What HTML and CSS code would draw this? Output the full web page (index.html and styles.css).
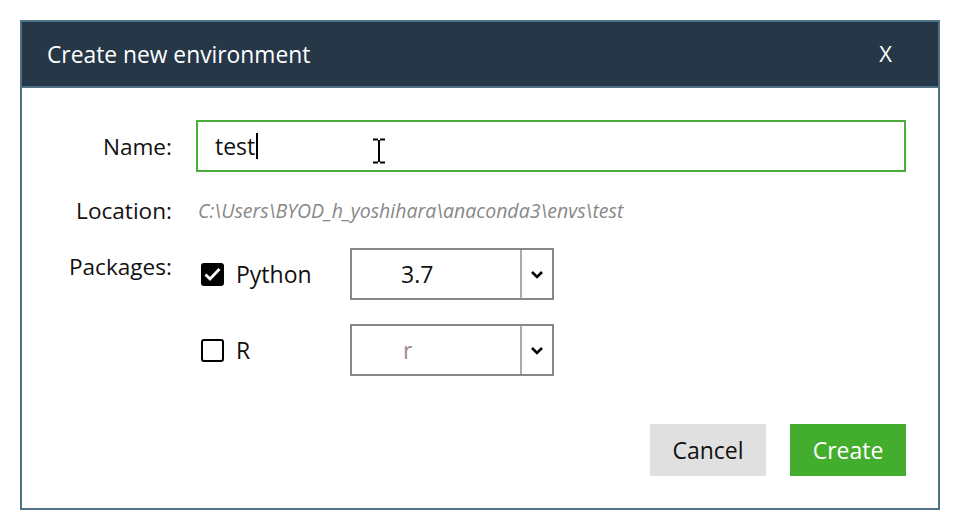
FILE: index.html
```html
<!DOCTYPE html>
<html lang="en">
<head>
  <meta charset="UTF-8">
  <title>Create new environment</title>
  <link rel="stylesheet" href="styles.css">
</head>
<body>
  <div class="dialog">
    <div class="dialog-header">
      <h1>Create new environment</h1>
      <span class="close">X</span>
    </div>

    <div class="dialog-body">
      <div class="row row-name">
        <label class="label">Name:</label>
        <div class="input">
          <span class="input-text">test</span><span class="caret"></span>
          <svg class="ibeam" width="14" height="26" viewBox="0 0 14 26">
            <path d="M1 1.5h5M8 1.5h5M7 2v22M1 24.5h5M8 24.5h5" stroke="#000" stroke-width="2" fill="none"/>
          </svg>
        </div>
      </div>

      <div class="row row-location">
        <span class="label">Location:</span>
        <span class="path">C:\Users\BYOD_h_yoshihara\anaconda3\envs\test</span>
      </div>

      <div class="row row-packages">
        <span class="label label-top">Packages:</span>
        <div class="packages">
          <div class="package">
            <div class="check">
              <span class="box checked">
                <svg width="17" height="15" viewBox="0 0 17 15"><path d="M1.5 7.5l4.5 4.5 9.5-10" stroke="#fff" stroke-width="2.8" fill="none"/></svg>
              </span>
              <span class="pkg-name">Python</span>
            </div>
            <div class="select">
              <span class="select-value">3.7</span>
              <span class="select-arrow">
                <svg width="14" height="9" viewBox="0 0 14 9"><path d="M2 2l5 5 5-5" stroke="#000" stroke-width="2.6" fill="none"/></svg>
              </span>
            </div>
          </div>
          <div class="package">
            <div class="check">
              <span class="box"></span>
              <span class="pkg-name">R</span>
            </div>
            <div class="select">
              <span class="select-value muted">r</span>
              <span class="select-arrow">
                <svg width="14" height="9" viewBox="0 0 14 9"><path d="M2 2l5 5 5-5" stroke="#000" stroke-width="2.6" fill="none"/></svg>
              </span>
            </div>
          </div>
        </div>
      </div>

      <div class="footer">
        <button class="btn btn-cancel">Cancel</button>
        <button class="btn btn-create">Create</button>
      </div>
    </div>
  </div>
</body>
</html>
```

FILE: styles.css
```css
* {
  margin: 0;
  padding: 0;
  box-sizing: border-box;
}

body {
  font-family: 'Open Sans', 'Noto Sans', sans-serif;
  background: #fff;
  color: #111;
  padding: 20px;
}

.dialog {
  width: 920px;
  height: 490px;
  border: 2px solid #4e7184;
  display: flex;
  flex-direction: column;
}

.dialog-header {
  height: 66px;
  background: #263748;
  border-bottom: 2px solid #4e7184;
  display: flex;
  align-items: center;
  justify-content: space-between;
  padding: 0 46px 0 25px;
}

.dialog-header h1 {
  font-size: 22.8px;
  font-weight: 400;
  color: #fff;
}

.close {
  color: #fff;
  font-size: 22px;
  margin-top: -2px;
}

.dialog-body {
  flex: 1;
  padding: 32px 32px 0 0;
  display: flex;
  flex-direction: column;
}

.row {
  display: flex;
  align-items: center;
}

.label {
  width: 150px;
  margin-right: 24px;
  text-align: right;
  font-size: 22.6px;
  color: #111;
}

.label-top {
  align-self: flex-start;
  padding-top: 3px;
}

.input {
  flex: 1;
  height: 52px;
  border: 2px solid #4cae3a;
  display: flex;
  align-items: center;
  padding-left: 17px;
  position: relative;
}

.input-text {
  font-size: 23px;
  color: #111;
}

.caret {
  display: inline-block;
  width: 2px;
  height: 26px;
  background: #000;
  margin-left: 1px;
}

.ibeam {
  position: absolute;
  left: 174px;
  top: 16px;
}

.row-location {
  margin-top: 26px;
  height: 24px;
}

.path {
  font-size: 19.5px;
  font-style: italic;
  color: #888;
  padding-left: 2px;
}

.row-packages {
  margin-top: 26px;
}

.packages {
  display: flex;
  flex-direction: column;
  gap: 24px;
}

.package {
  display: flex;
  align-items: center;
}

.check {
  width: 154px;
  display: flex;
  align-items: center;
  padding-left: 5px;
}

.box {
  width: 23px;
  height: 23px;
  border: 2.5px solid #000;
  border-radius: 3px;
  display: flex;
  align-items: center;
  justify-content: center;
  margin-right: 12px;
}

.box.checked {
  background: #000;
}

.pkg-name {
  font-size: 23px;
  color: #111;
}

.select {
  width: 204px;
  height: 52px;
  border: 2px solid #888;
  display: flex;
}

.select-value {
  flex: 1;
  display: flex;
  align-items: center;
  padding-left: 49px;
  font-size: 23px;
  color: #111;
}

.select-value.muted {
  color: #a08a8a;
  padding-left: 51px;
}

.select-arrow {
  width: 32px;
  border-left: 2px solid #aaa;
  display: flex;
  align-items: center;
  justify-content: center;
}

.footer {
  margin-top: auto;
  margin-bottom: 32px;
  display: flex;
  justify-content: flex-end;
  gap: 24px;
}

.btn {
  width: 116px;
  height: 52px;
  border: none;
  font-family: inherit;
  font-size: 23px;
}

.btn-cancel {
  background: #e0e0e0;
  color: #111;
}

.btn-create {
  background: #43ad2e;
  color: #fff;
}
```
